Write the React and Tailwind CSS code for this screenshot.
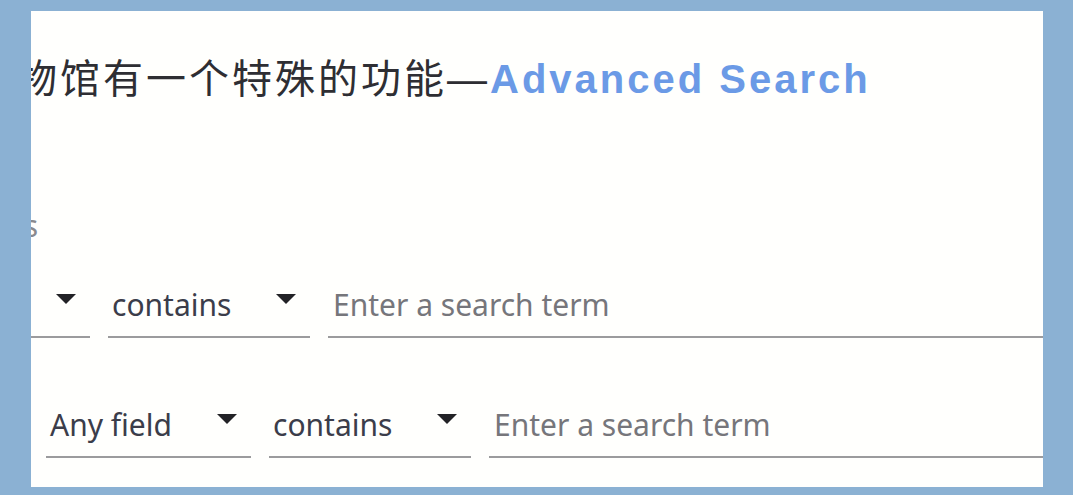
import React from "react";

function Arrow() {
  return (
    <svg width="20" height="10" viewBox="0 0 20 10" className="mt-[6px] shrink-0">
      <path d="M0 0 L20 0 L10 10 Z" fill="#222226" />
    </svg>
  );
}

function Select({ value, width }) {
  return (
    <div
      className={`flex shrink-0 items-start justify-between border-b-2 border-[#9b9b9d] pb-[14px] pl-[4px] pr-[14px] ${width}`}
    >
      <span className="text-[#3b3d4a]">{value}</span>
      <Arrow />
    </div>
  );
}

function Row({ offset }) {
  return (
    <div className={`flex w-[1400px] gap-[18px] leading-[34px] ${offset}`}>
      <Select value="Any field" width="w-[205px]" />
      <Select value="contains" width="w-[202px]" />
      <div className="flex-1 border-b-2 border-[#9b9b9d] pb-[14px] pl-[5px]">
        <span className="text-[#76767b]">Enter a search term</span>
      </div>
    </div>
  );
}

export default function App() {
  return (
    <div className="h-[495px] w-[1073px] overflow-hidden bg-[#8bb1d3] pb-[8px] pl-[31px] pr-[30px] pt-[11px]">
      <div className="h-full overflow-hidden bg-[#fffffd]">
        <h1
          className="ml-[-57px] mt-[44px] whitespace-nowrap text-[40px] leading-[48px] tracking-[3px] text-[#2e2e33]"
          style={{ fontFamily: '"Liberation Sans", "Noto Sans CJK SC", sans-serif' }}
        >
          博物馆有一个特殊的功能—<span className="font-bold text-[#6b9ae6]">Advanced Search</span>
        </h1>

        <div className="text-[30px]" style={{ fontFamily: '"Noto Sans", sans-serif' }}>
          <div className="ml-[-213px] mt-[107px] w-[220px] text-right leading-[32px] text-[#8a8a8e]">
            Search terms
          </div>

          <div className="mt-[46px]">
            <Row offset="ml-[-146px]" />
          </div>
          <div className="mt-[70px]">
            <Row offset="ml-[15px]" />
          </div>
        </div>
      </div>
    </div>
  );
}
